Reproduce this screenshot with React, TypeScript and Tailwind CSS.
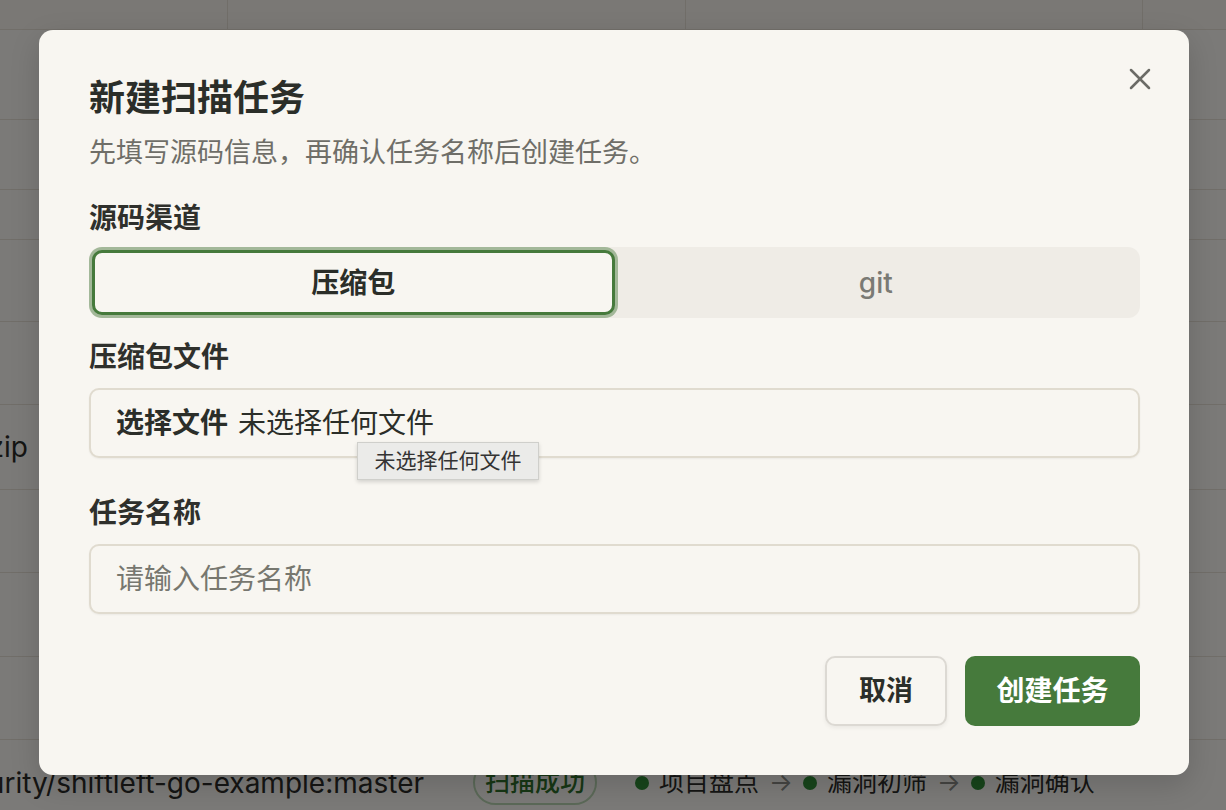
import { X } from "lucide-react";

const font = { fontFamily: 'Inter, "Noto Sans CJK SC", sans-serif' };

type Row = { h: string; name?: string; cell?: string; status?: boolean };

const rows: Row[] = [
  { h: "h-[90px]" },
  { h: "h-[70px]" },
  { h: "h-[50px]" },
  { h: "h-[82px]" },
  { h: "h-[83px]" },
  { h: "h-[85px]", name: "shiftleft-go-example.zip", cell: "w-[28px]" },
  { h: "h-[83px]" },
  { h: "h-[84px]" },
  { h: "h-[83px]" },
  { h: "h-[86px]", name: "github.com/ShiftLeftSecurity/shiftleft-go-example:master", cell: "w-[424px]", status: true },
];

function Background() {
  return (
    <div className="w-full text-[28px] text-[#2b2b28]">
      <div className="flex h-[30px] border-b border-[#e2ddd3] bg-[#f4f1ea]">
        <div className="w-[228px] border-r border-[#e2ddd3]" />
        <div className="w-[458px] border-r border-[#e2ddd3]" />
        <div className="w-[457px] border-r border-[#e2ddd3]" />
        <div className="flex-1" />
      </div>
      {rows.map((r, i) => (
        <div key={i} className={`flex items-center border-b border-[#e2ddd3] ${r.h}`}>
          {r.name && (
            <div className={`flex shrink-0 justify-end overflow-hidden whitespace-nowrap ${r.cell}`}>
              <span>{r.name}</span>
            </div>
          )}
          {r.status && (
            <div className="ml-[49px] flex items-center gap-[10px] text-[25px]">
              <span className="rounded-full border-2 border-[#b7d3b0] px-[10px] py-[2px] font-medium text-[#2f6e2b]">扫描成功</span>
              <span className="ml-[28px] h-[14px] w-[14px] rounded-full bg-[#2f8a36]" />
              <span>项目盘点</span>
              <span className="text-[#8a8a86]">→</span>
              <span className="h-[14px] w-[14px] rounded-full bg-[#2f8a36]" />
              <span>漏洞初筛</span>
              <span className="text-[#8a8a86]">→</span>
              <span className="h-[14px] w-[14px] rounded-full bg-[#2f8a36]" />
              <span>漏洞确认</span>
            </div>
          )}
        </div>
      ))}
    </div>
  );
}

export default function App() {
  return (
    <div className="relative h-[810px] w-full overflow-hidden bg-[#f7f5f0]" style={font}>
      <Background />
      <div className="absolute inset-0 flex bg-black/50 pl-[39px] pt-[30px]">
        <div className="relative flex h-[745px] w-[1150px] flex-col rounded-[14px] bg-[#f8f6f1] pl-[50px] pr-[49px] pt-[46px] shadow-[0_10px_30px_rgba(0,0,0,0.15)]">
          <button className="absolute right-[31px] top-[31px] text-[#6b6b66]">
            <X size={36} strokeWidth={1.7} />
          </button>

          <h2 className="text-[36px] font-bold leading-[44px] text-[#2b2e29]">新建扫描任务</h2>
          <p className="mt-[15px] text-[27px] leading-[36px] text-[#6f6e68]">先填写源码信息，再确认任务名称后创建任务。</p>

          <div className="mt-[29px] text-[28px] font-semibold leading-[36px] text-[#2f302c]">源码渠道</div>
          <div className="mt-[11px] grid h-[71px] grid-cols-2 rounded-[12px] bg-[#efece6] p-[3px]">
            <button className="rounded-[10px] border-[3px] border-[#467a3c] bg-[#f8f6f1] text-[28px] font-bold text-[#2b2e29] shadow-[0_0_0_3px_rgba(70,122,60,0.45)]">
              压缩包
            </button>
            <button className="rounded-[10px] text-[28px] font-medium text-[#7a7a74]">git</button>
          </div>

          <div className="mt-[21px] text-[28px] font-semibold leading-[36px] text-[#2f302c]">压缩包文件</div>
          <div className="relative mt-[13px] flex h-[70px] items-center rounded-[10px] border-2 border-[#e0dbcf] bg-[#f8f6f1] px-[25px] text-[28px] text-[#2b2e29] shadow-[0_1px_2px_rgba(0,0,0,0.05)]">
            <span className="font-bold">选择文件</span>
            <span className="ml-[10px]">未选择任何文件</span>
            <div className="absolute left-[266px] top-[52px] z-10 flex h-[38px] w-[182px] items-center justify-center border border-[#cfcfcb] bg-[#ebebe9] text-[21px] text-[#333] shadow-[0_2px_4px_rgba(0,0,0,0.15)]">
              未选择任何文件
            </div>
          </div>

          <div className="mt-[37px] text-[28px] font-semibold leading-[36px] text-[#2f302c]">任务名称</div>
          <input
            className="mt-[13px] h-[70px] rounded-[10px] border-2 border-[#e0dbcf] bg-[#f8f6f1] px-[25px] text-[28px] text-[#2b2e29] outline-none placeholder:text-[#77776f] shadow-[0_1px_2px_rgba(0,0,0,0.05)]"
            placeholder="请输入任务名称"
          />

          <div className="mt-[42px] flex justify-end gap-[18px]">
            <button className="h-[70px] w-[122px] rounded-[10px] border-2 border-[#dcd9d3] bg-[#f8f6f1] text-[27px] font-bold text-[#2b2e29] shadow-[0_2px_4px_rgba(0,0,0,0.06)]">
              取消
            </button>
            <button className="h-[70px] w-[175px] rounded-[10px] bg-[#467a3c] text-[28px] font-bold text-white">
              创建任务
            </button>
          </div>
        </div>
      </div>
    </div>
  );
}
